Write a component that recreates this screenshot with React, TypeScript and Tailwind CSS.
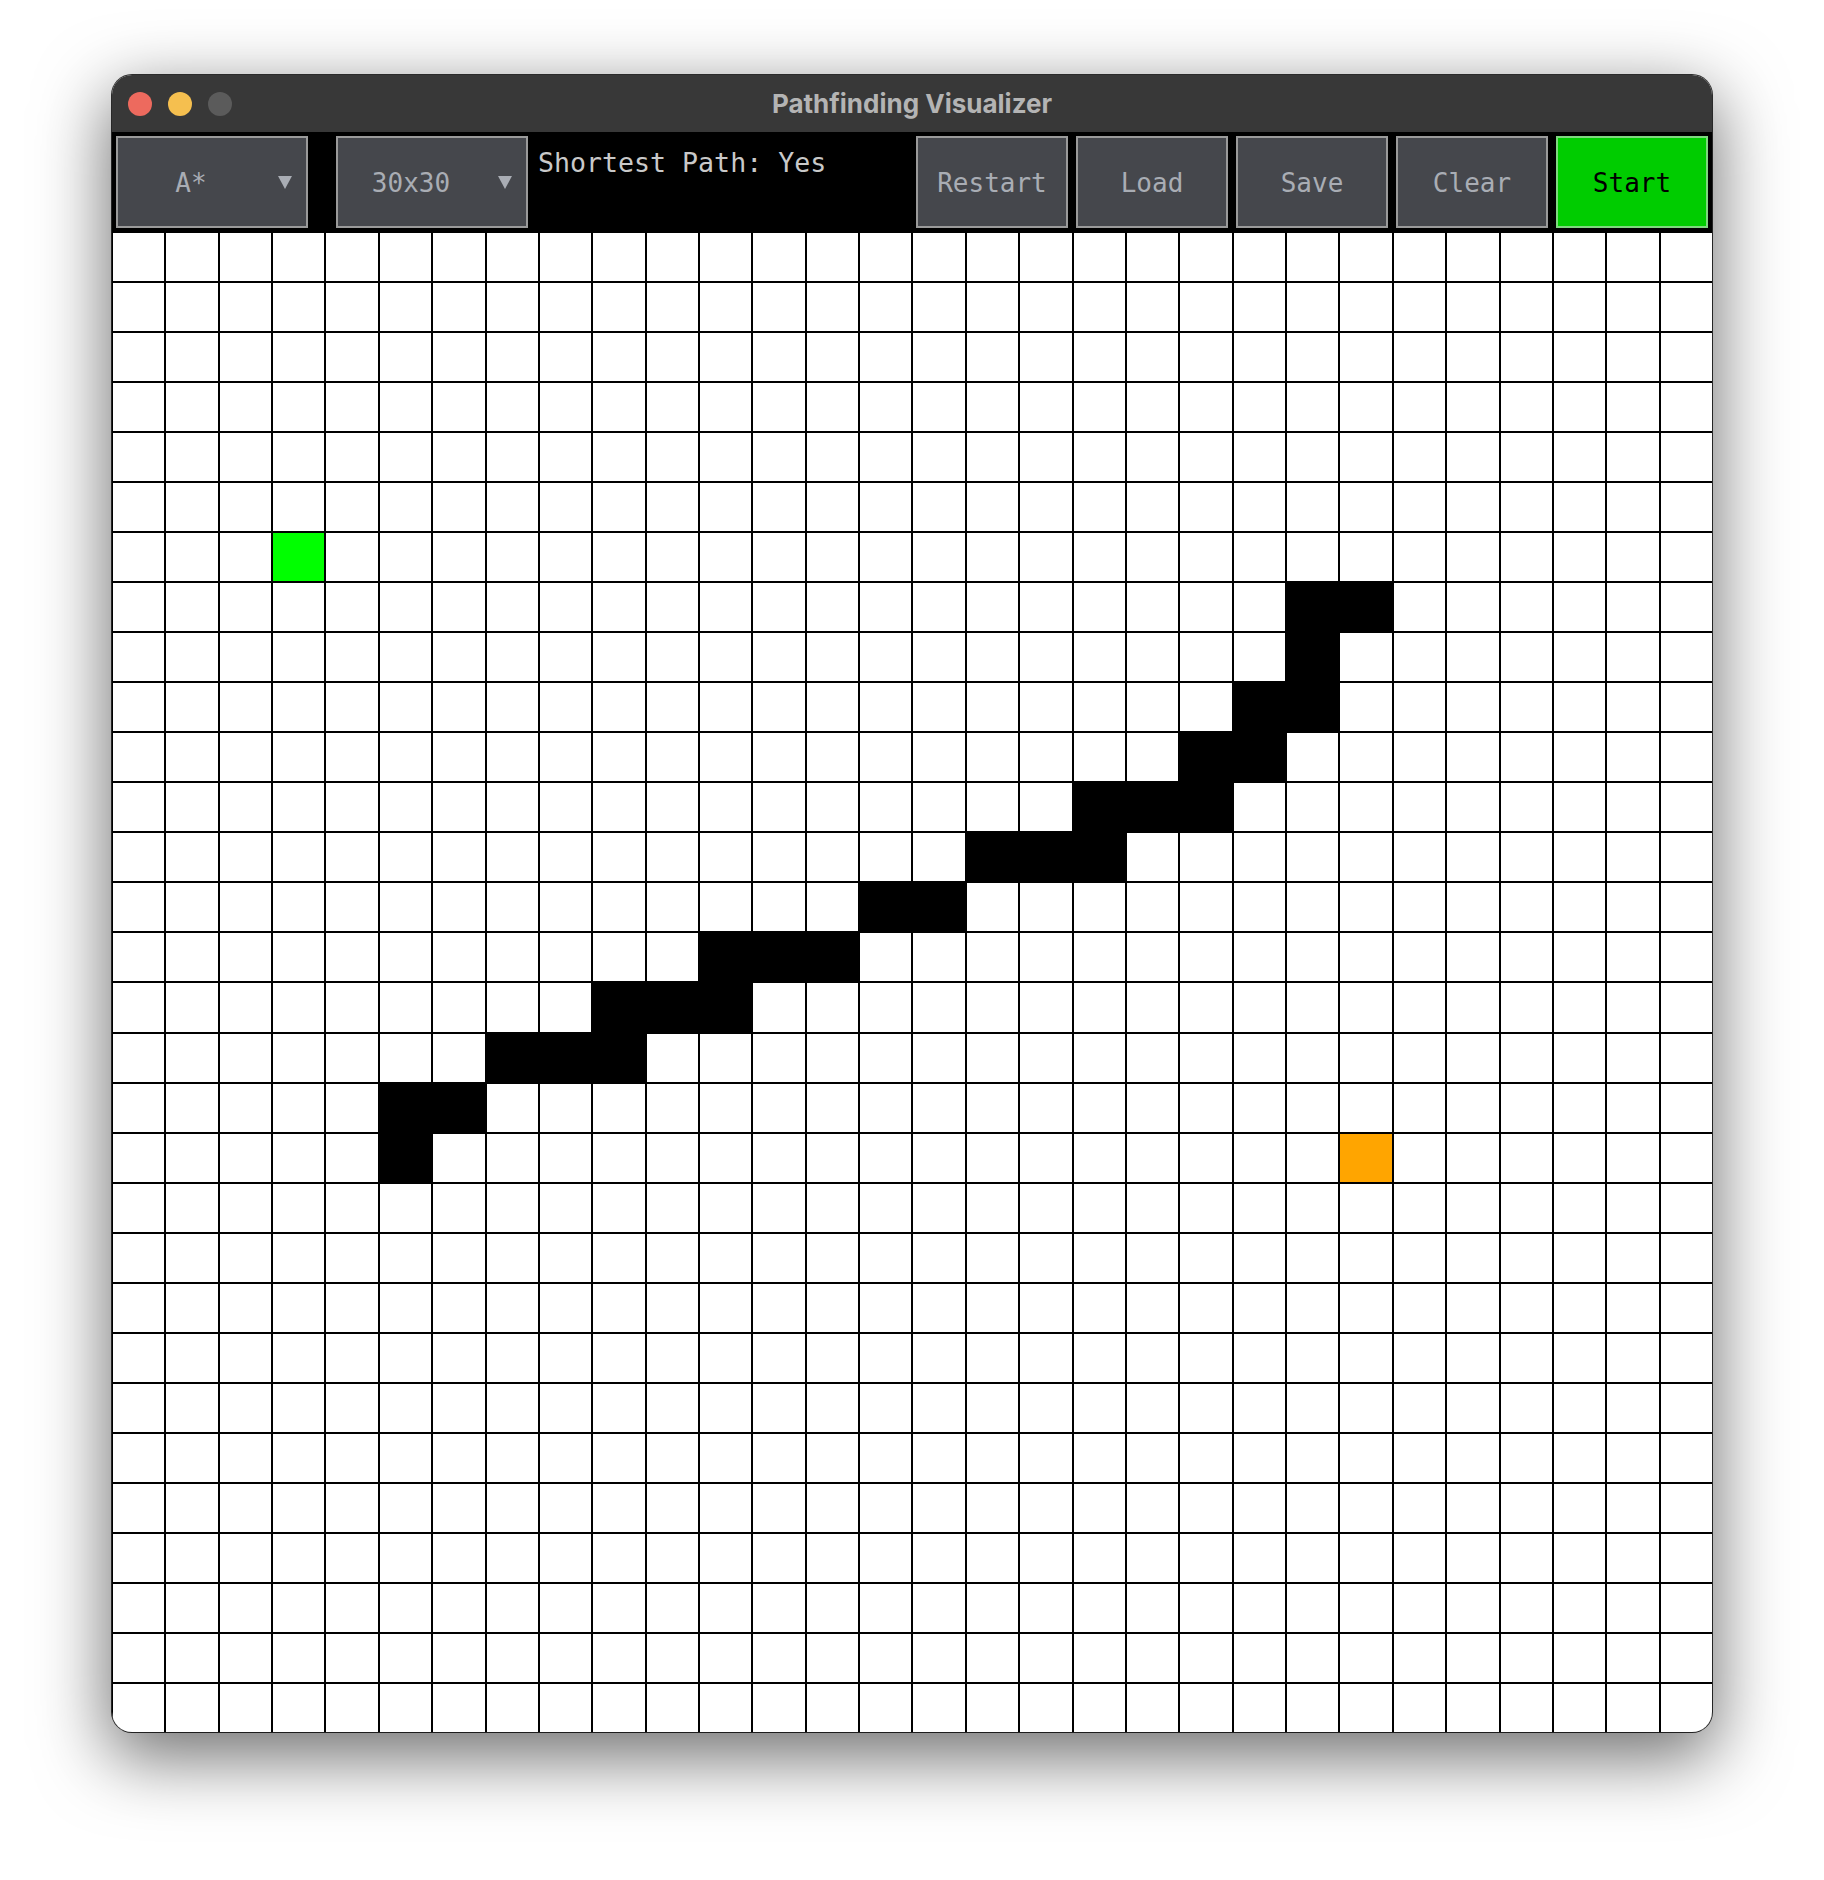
const COLS = 30;
const ROWS = 30;

const start = { r: 6, c: 3 };
const end = { r: 18, c: 23 };

// wall cells as [row, [cols]]
const wallRows: [number, number[]][] = [
  [7, [22, 23]],
  [8, [22]],
  [9, [21, 22]],
  [10, [20, 21]],
  [11, [18, 19, 20]],
  [12, [16, 17, 18]],
  [13, [14, 15]],
  [14, [11, 12, 13]],
  [15, [9, 10, 11]],
  [16, [7, 8, 9]],
  [17, [5, 6]],
  [18, [5]],
];

const walls = new Set<string>();
wallRows.forEach(([r, cols]) => cols.forEach((c) => walls.add(`${r}-${c}`)));

const mono = "font-['DejaVu_Sans_Mono','Liberation_Mono',monospace]";

function Arrow() {
  return (
    <svg width="14" height="13" viewBox="0 0 14 13" className="shrink-0 ml-[14px] mr-[14px]">
      <polygon points="0,0 14,0 7,13" fill="#a9adb4" />
    </svg>
  );
}

function Dropdown({ label }: { label: string }) {
  return (
    <div className="flex h-full items-center border-2 border-[#9a9a9a] bg-[#45474c]">
      <span className={`flex-1 pt-[2px] text-center text-[26px] leading-none text-[#a9adb4] ${mono}`}>{label}</span>
      <Arrow />
    </div>
  );
}

function ToolButton({ label, primary }: { label: string; primary?: boolean }) {
  return (
    <div className="h-full w-[160px] p-1">
      <div
        className={`flex h-full items-center justify-center border-2 pt-[1px] text-[26px] leading-none ${mono} ${
          primary ? 'border-[#7fd87f] bg-[#00cc00] text-black' : 'border-[#9a9a9a] bg-[#45474c] text-[#a9adb4]'
        }`}
      >
        {label}
      </div>
    </div>
  );
}

export default function App() {
  const cells = [];
  for (let r = 0; r < ROWS; r++) {
    for (let c = 0; c < COLS; c++) {
      let color = 'bg-white';
      if (r === start.r && c === start.c) color = 'bg-[#00ff00]';
      else if (r === end.r && c === end.c) color = 'bg-[#ffa500]';
      else if (walls.has(`${r}-${c}`)) color = 'bg-black';
      cells.push(<div key={`${r}-${c}`} className={color} />);
    }
  }

  return (
    <div className="flex min-h-screen justify-center bg-white pt-[75px]">
      <div className="h-[1657px] w-[1600px] overflow-hidden rounded-[20px] bg-white shadow-[0_22px_70px_4px_rgba(0,0,0,0.56)] ring-1 ring-black/80">
        {/* Title bar */}
        <div className="grid h-[57px] grid-cols-[1fr_auto_1fr] items-center bg-[#383838]">
          <div className="flex items-center gap-4 pl-4">
            <span className="h-6 w-6 rounded-full bg-[#ed6a5e]" />
            <span className="h-6 w-6 rounded-full bg-[#f5bf4f]" />
            <span className="h-6 w-6 rounded-full bg-[#5b5b5b]" />
          </div>
          <div className="font-['Inter','Noto_Sans',sans-serif] text-[26px] font-bold text-[#b4b4b4]">
            Pathfinding Visualizer
          </div>
          <div />
        </div>

        {/* Toolbar */}
        <div className="flex h-[100px] bg-black">
          <div className="h-full w-[200px] p-1">
            <Dropdown label="A*" />
          </div>
          <div className="h-full w-[200px] p-1 ml-[20px]">
            <Dropdown label="30x30" />
          </div>
          <div className={`flex-1 pl-[6px] pt-[18px] text-[26.6px] leading-none text-[#c9c9c9] ${mono}`}>
            Shortest Path: Yes
          </div>
          <ToolButton label="Restart" />
          <ToolButton label="Load" />
          <ToolButton label="Save" />
          <ToolButton label="Clear" />
          <ToolButton label="Start" primary />
        </div>

        {/* Grid */}
        <div className="grid h-[1500px] grid-cols-[repeat(30,minmax(0,1fr))] grid-rows-[repeat(30,minmax(0,1fr))] gap-[2px] bg-black pl-px pt-px">
          {cells}
        </div>
      </div>
    </div>
  );
}
